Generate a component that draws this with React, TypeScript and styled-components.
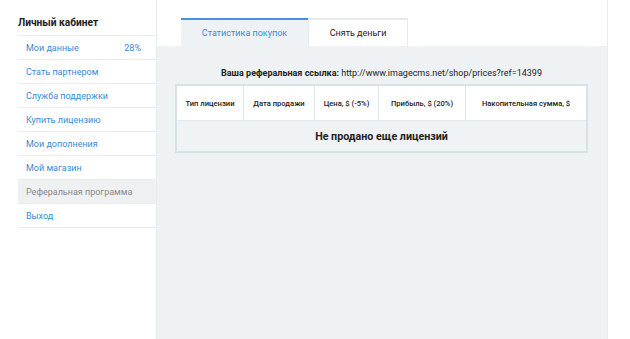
import React from "react";
import styled, { createGlobalStyle } from "styled-components";

const Global = createGlobalStyle`
  html, body { margin: 0; padding: 0; background: #fff; }
  body { font-family: Roboto, "Liberation Sans", Arial, sans-serif; }
  * { box-sizing: border-box; }
`;

const Page = styled.div`
  display: flex;
  height: 339px;
  width: 630px;
  background: #fff;
`;

const Sidebar = styled.aside`
  width: 157px;
  padding-left: 18px;
  border-right: 1px solid #e8ecef;
`;

const SideTitle = styled.div`
  height: 36px;
  padding-top: 17px;
  font-size: 10.2px;
  line-height: 12px;
  font-weight: 700;
  color: #222;
  border-bottom: 1px solid #e8ecef;
`;

const NavItem = styled.div<{ $active?: boolean }>`
  height: 24px;
  display: flex;
  align-items: center;
  justify-content: space-between;
  padding: 0 15px 0 8px;
  font-size: 9px;
  white-space: nowrap;
  color: ${(p) => (p.$active ? "#8a8a8a" : "#3a8ad6")};
  background: ${(p) => (p.$active ? "#eef0f2" : "transparent")};
  border-bottom: 1px solid #e8ecef;
`;

const Main = styled.main`
  width: 451px;
  display: flex;
  flex-direction: column;
  border-right: 1px solid #e8ecef;
`;

const Tabs = styled.div`
  display: flex;
  padding: 18px 0 0 24px;
  height: 46px;
`;

const Tab = styled.div<{ $active?: boolean }>`
  height: 28px;
  display: flex;
  align-items: center;
  justify-content: center;
  font-size: 9px;
  white-space: nowrap;
  width: ${(p) => (p.$active ? "127px" : "100px")};
  color: ${(p) => (p.$active ? "#3a8ad6" : "#222")};
  background: ${(p) => (p.$active ? "#eff2f4" : "#fff")};
  border-top: 2px solid ${(p) => (p.$active ? "#4a90d9" : "#e6eaed")};
  border-right: ${(p) => (p.$active ? "none" : "1px solid #e6eaed")};
  border-left: ${(p) => (p.$active ? "none" : "1px solid #e6eaed")};
`;

const Content = styled.div`
  flex: 1;
  background: #eff2f4;
  padding: 20px 19px 0 18px;
`;

const RefLine = styled.div`
  text-align: center;
  font-size: 9px;
  line-height: 14px;
  color: #222;
  height: 18px;
  white-space: nowrap;
  b { font-weight: 700; }
`;

const Table = styled.div`
  border: 2px solid #d8e1e6;
`;

const HeadRow = styled.div`
  display: grid;
  grid-template-columns: 67px 71px 64px 87px 1fr;
  background: #fff;
  height: 34px;
`;

const HeadCell = styled.div`
  display: flex;
  align-items: center;
  justify-content: center;
  font-size: 7.6px;
  font-weight: 500;
  white-space: nowrap;
  color: #222;
  border-right: 1px solid #e2e8eb;
  &:last-child { border-right: none; }
`;

const EmptyRow = styled.div`
  height: 31px;
  display: flex;
  align-items: center;
  justify-content: center;
  font-size: 10.7px;
  font-weight: 700;
  color: #222;
  background: #f0f3f5;
  border-top: 1px solid #e2e8eb;
`;

const items = [
  "Мои данные",
  "Стать партнером",
  "Служба поддержки",
  "Купить лицензию",
  "Мои дополнения",
  "Мой магазин",
  "Реферальная программа",
  "Выход",
];

export default function App() {
  return (
    <Page>
      <Global />
      <Sidebar>
        <SideTitle>Личный кабинет</SideTitle>
        {items.map((t, i) => (
          <NavItem key={t} $active={i === 6}>
            <span>{t}</span>
            {i === 0 && <span>28%</span>}
          </NavItem>
        ))}
      </Sidebar>
      <Main>
        <Tabs>
          <Tab $active>Статистика покупок</Tab>
          <Tab>Снять деньги</Tab>
        </Tabs>
        <Content>
          <RefLine>
            <b>Ваша реферальная ссылка:</b> http://www.imagecms.net/shop/prices?ref=14399
          </RefLine>
          <Table>
            <HeadRow>
              <HeadCell>Тип лицензии</HeadCell>
              <HeadCell>Дата продажи</HeadCell>
              <HeadCell>Цена, $ (-5%)</HeadCell>
              <HeadCell>Прибыль, $ (20%)</HeadCell>
              <HeadCell>Накопительная сумма, $</HeadCell>
            </HeadRow>
            <EmptyRow>Не продано еще лицензий</EmptyRow>
          </Table>
        </Content>
      </Main>
    </Page>
  );
}
